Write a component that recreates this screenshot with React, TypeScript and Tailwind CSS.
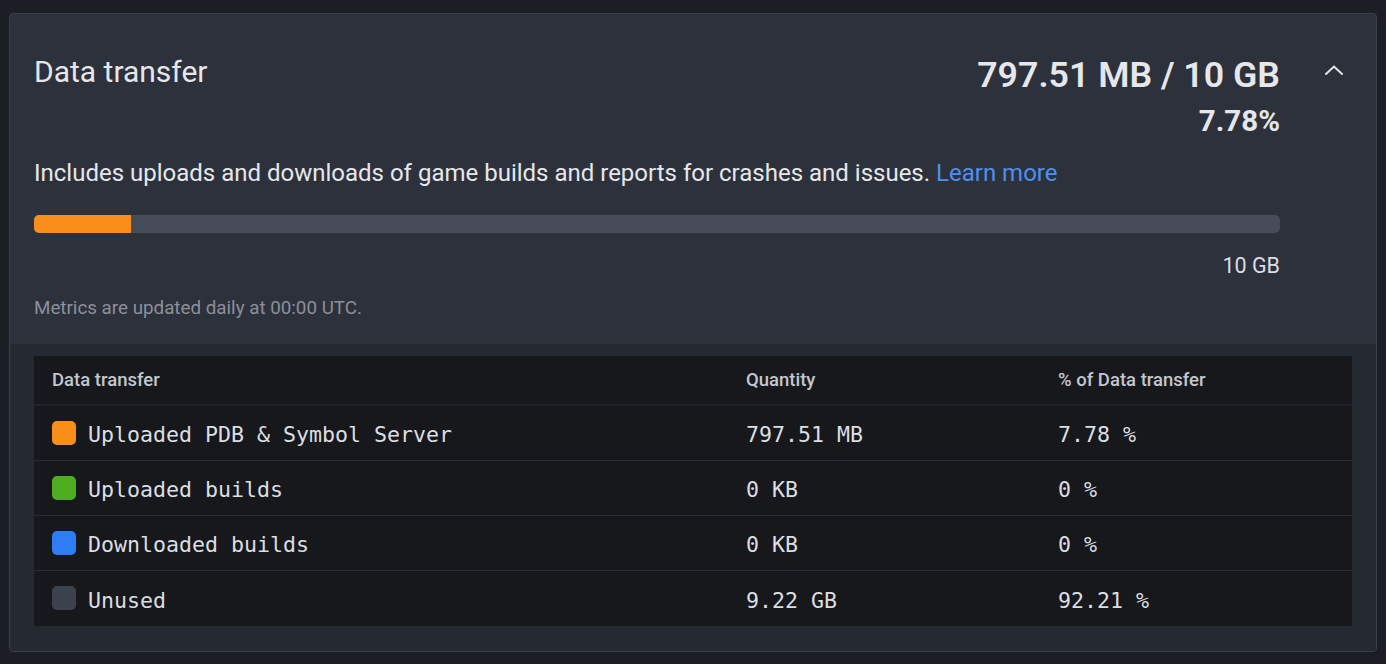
import React from 'react';

type Row = {
  name: string;
  quantity: string;
  percent: string;
  swatch: string;
};

const rows: Row[] = [
  { name: 'Uploaded PDB & Symbol Server', quantity: '797.51 MB', percent: '7.78 %', swatch: 'bg-[#f98e1b]' },
  { name: 'Uploaded builds', quantity: '0 KB', percent: '0 %', swatch: 'bg-[#4ead21]' },
  { name: 'Downloaded builds', quantity: '0 KB', percent: '0 %', swatch: 'bg-[#2e7cf6]' },
  { name: 'Unused', quantity: '9.22 GB', percent: '92.21 %', swatch: 'bg-[#3c424d]' }
];

const ChevronUp: React.FC = () =>
<svg width="18" height="10" viewBox="0 0 18 10" fill="none">
    <polyline points="1,9 9,1.5 17,9" stroke="#e3e5e9" strokeWidth="2" strokeLinecap="square" />
  </svg>;


const App: React.FC = () => {
  const used = 7.78;
  return (
    <div className="min-h-[664px] bg-[#1b1e25] pt-[13px] px-[9px] font-['Roboto',sans-serif]">
      <div className="border border-[#3a3f4c] rounded-[4px] overflow-hidden bg-[#2c313c]">
        {/* Summary */}
        <div className="pl-[24px] pt-[39px] pb-[24px] border-b border-[#23272f]">
          <div className="flex items-start">
            <h2 className="flex-1 text-[30px] leading-[38px] text-[#e6e7ea]">Data transfer</h2>
            <div className="text-right text-[#e6e7ea]">
              <div className="text-[35.7px] leading-[44px] font-semibold">797.51 MB / 10 GB</div>
              <div className="text-[29.5px] leading-[48px] font-bold">{used}%</div>
            </div>
            <div className="w-[96px] pl-[45px] pt-[12px] flex">
              <ChevronUp />
            </div>
          </div>
          <div className="pr-[96px]">
            <p className="mt-[12px] text-[24px] leading-[32px] text-[#e6e7ea]">
              Includes uploads and downloads of game builds and reports for crashes and issues.{' '}
              <a href="#" className="text-[#4d90f0]">Learn more</a>
            </p>
            <div className="mt-[26px] h-[18px] rounded-[5px] bg-[#454d5b] overflow-hidden">
              <div className="h-full bg-[#f98e1b]" style={{ width: `${used}%` }} />
            </div>
            <div className="mt-[19px] text-right text-[21.5px] leading-[28px] text-[#dcdee2]">10 GB</div>
            <p className="mt-[16px] text-[18.8px] leading-[24px] text-[#8c909a]">Metrics are updated daily at 00:00 UTC.</p>
          </div>
        </div>

        {/* Breakdown table */}
        <div className="bg-[#252932] pt-[11px] pb-[25px] px-[24px]">
          <div className="bg-[#16181c]">
            <div className="grid grid-cols-[694px_312px_1fr] h-[50px] pt-[2px] items-center border-b-2 border-[#202329] text-[18.5px] font-medium text-[#c3c7cf]">
              <div className="px-[18px]">Data transfer</div>
              <div className="px-[18px]">Quantity</div>
              <div className="px-[18px]">% of Data transfer</div>
            </div>
            {rows.map((r, i) =>
            <div
              key={r.name}
              className={`grid grid-cols-[694px_312px_1fr] h-[55px] items-center text-[21.6px] text-[#dcdee2] font-['DejaVu_Sans_Mono',monospace] ${i < rows.length - 1 ? 'border-b border-[#2a2d34]' : ''}`}>

                <div className="px-[18px] flex items-center gap-[12px]">
                  <span className={`w-[24px] h-[24px] rounded-[5px] ${r.swatch}`} />
                  <span className="pt-[5px]">{r.name}</span>
                </div>
                <div className="px-[18px] pt-[5px]">{r.quantity}</div>
                <div className="px-[18px] pt-[5px]">{r.percent}</div>
              </div>
            )}
          </div>
        </div>
      </div>
    </div>);

};

export default App;
